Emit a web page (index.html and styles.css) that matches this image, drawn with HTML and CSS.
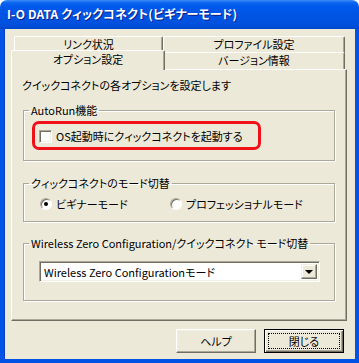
FILE: index.html
```html
<!DOCTYPE html>
<html lang="ja">
<head>
  <meta charset="UTF-8" />
  <title>I-O DATA クィックコネクト(ビギナーモード)</title>
  <link rel="stylesheet" href="styles.css">
</head>
<body>
  <div class="window">
    <div class="titlebar">
      <span class="title">I-O DATA クィックコネクト(ビギナーモード)</span>
    </div>

    <div class="client">
      <div class="tabs">
        <div class="tab-row back">
          <div class="tab tab-left">リンク状況</div>
          <div class="tab tab-right">プロファイル設定</div>
        </div>
        <div class="tab-row front">
          <div class="tab tab-left selected">オプション設定</div>
          <div class="tab tab-right">バージョン情報</div>
        </div>
      </div>

      <div class="panel">
        <p class="intro">クイックコネクトの各オプションを設定します</p>

        <fieldset class="group group-autorun">
          <legend>AutoRun機能</legend>
          <label class="highlight">
            <span class="check"></span>
            <span>OS起動時にクィックコネクトを起動する</span>
          </label>
        </fieldset>

        <fieldset class="group group-mode">
          <legend>クィックコネクトのモード切替</legend>
          <div class="radios">
            <label class="radio-item beginner">
              <span class="radio checked"></span>
              <span>ビギナーモード</span>
            </label>
            <label class="radio-item">
              <span class="radio"></span>
              <span>プロフェッショナルモード</span>
            </label>
          </div>
        </fieldset>

        <fieldset class="group group-wzc">
          <legend>Wireless Zero Configuration/クイックコネクト モード切替</legend>
          <div class="combo">
            <span class="combo-text">Wireless Zero Configurationモード</span>
            <span class="combo-btn"><span class="arrow"></span></span>
          </div>
        </fieldset>
      </div>

      <div class="buttons">
        <button class="btn">ヘルプ</button>
        <button class="btn default"><span class="focus">閉じる</span></button>
      </div>
    </div>
  </div>
</body>
</html>
```

FILE: styles.css
```css
* {
  box-sizing: border-box;
}

body {
  margin: 0;
  background: #fff;
  font-family: "Noto Sans CJK JP", sans-serif;
  font-size: 11px;
  font-feature-settings: "palt";
  color: #000;
  white-space: nowrap;
}

.window {
  width: 359px;
  height: 363px;
  display: flex;
  flex-direction: column;
}

.titlebar {
  flex: none;
  height: 29px;
  border-radius: 7px 7px 0 0;
  background: linear-gradient(to bottom, #3a8cf7 0px, #0a62ee 3px, #0058ea 7px, #0053e2 18px, #0050dc 25px, #0047cc 29px);
  display: flex;
  align-items: center;
  padding: 0 0 1px 7px;
}

.title {
  color: #fff;
  font-weight: bold;
  font-size: 12px;
  letter-spacing: 0.15px;
  line-height: 14px;
  text-shadow: 1px 1px #0a1e8a;
}

.client {
  flex: 1;
  background: #ece9d8;
  border: 4px solid #0053e4;
  border-top: 0;
  box-shadow: inset 1px 0 #0841c8;
  padding: 7px 8px 0 7px;
  display: flex;
  flex-direction: column;
}

/* tabs */
.tabs {
  flex: none;
  height: 33px;
  display: flex;
  flex-direction: column;
}

.tab-row {
  display: flex;
}

.tab-row.back {
  height: 16px;
  padding-left: 3px;
}

.tab-row.front {
  height: 17px;
  padding-left: 2px;
}

.tab {
  background: #ece9d8;
  border-top: 1px solid #fff;
  border-left: 1px solid #fff;
  border-right: 1px solid #716f64;
  box-shadow: inset -1px 0 #aca899;
  border-radius: 2px 2px 0 0;
  text-align: center;
  line-height: 14px;
  height: 18px;
}

.back .tab-left { width: 149px; }
.back .tab-right { width: 182px; }
.front .tab-left { width: 150px; }
.front .tab-right { width: 182px; }

.tab.selected {
  position: relative;
  z-index: 2;
  width: 154px;
  height: 20px;
  margin: -2px -2px 0 -2px;
  line-height: 17px;
}

.panel {
  flex: none;
  height: 252px;
  border-top: 1px solid #fff;
  border-left: 1px solid #fff;
  border-right: 1px solid #716f64;
  border-bottom: 1px solid #716f64;
  box-shadow: inset -1px -1px #aca899;
  padding: 8px 11px 0 11px;
  display: flex;
  flex-direction: column;
}

.intro {
  margin: 0 0 0 -1px;
  line-height: 14px;
}

/* group boxes */
.group {
  margin: 0;
  padding: 0;
  border: 1px solid #aca899;
  box-shadow: inset 1px 1px #fff, 1px 1px #fff;
  min-width: 0;
}

.group legend {
  margin-left: 5px;
  padding: 0 2px;
  line-height: 14px;
}

.group-autorun {
  margin-top: 11px;
  padding: 4px 0 10px 0;
}

.highlight {
  display: flex;
  align-items: center;
  width: 229px;
  height: 29px;
  margin-left: 8px;
  border: 3px solid #f01018;
  border-radius: 7px;
  padding: 0 0 0 4px;
  gap: 4px;
  line-height: 14px;
}

.check {
  flex: none;
  width: 13px;
  height: 13px;
  background: #fff;
  border: 1px solid;
  border-color: #aca899 #fff #fff #aca899;
  box-shadow: inset 1px 1px #716f64, inset -1px -1px #f1efe2;
  margin-top: 2px;
}

.group-mode {
  margin-top: 15px;
  padding: 7px 0 10px 0;
}

.radios {
  display: flex;
  align-items: center;
  margin-left: 16px;
  line-height: 14px;
}

.radio-item {
  display: flex;
  align-items: center;
  gap: 4px;
}

.radio-item.beginner {
  width: 130px;
}

.radio {
  flex: none;
  width: 12px;
  height: 12px;
  border-radius: 50%;
  background: #fff;
  border: 1px solid;
  border-color: #aca899 #fff #fff #aca899;
  box-shadow: inset 1px 1px #716f64;
  display: flex;
  align-items: center;
  justify-content: center;
}

.radio.checked::after {
  content: "";
  width: 4px;
  height: 4px;
  border-radius: 50%;
  background: #000;
}

.group-wzc {
  margin-top: 14px;
  padding: 11px 0 18px 0;
}

.combo {
  width: 281px;
  height: 21px;
  margin-left: 15px;
  background: #fff;
  border: 1px solid;
  border-color: #aca899 #fff #fff #aca899;
  box-shadow: inset 1px 1px #716f64, inset -1px -1px #f1efe2;
  display: flex;
  align-items: center;
  padding: 0 2px 0 4px;
}

.combo-text {
  flex: 1;
  line-height: 14px;
}

.combo-btn {
  width: 16px;
  height: 15px;
  background: #ece9d8;
  border: 1px solid;
  border-color: #f1efe2 #716f64 #716f64 #f1efe2;
  box-shadow: inset -1px -1px #aca899, inset 1px 1px #fff;
  display: flex;
  align-items: center;
  justify-content: center;
}

.arrow {
  width: 0;
  height: 0;
  border-left: 4px solid transparent;
  border-right: 4px solid transparent;
  border-top: 4px solid #000;
  margin-top: 1px;
}

/* buttons */
.buttons {
  flex: none;
  display: flex;
  justify-content: flex-end;
  gap: 8px;
  margin-top: 8px;
  padding-right: 3px;
}

.btn {
  width: 80px;
  height: 24px;
  padding: 0;
  font-family: inherit;
  font-size: 11px;
  font-feature-settings: "palt";
  line-height: 14px;
  color: #000;
  background: #ece9d8;
  border: 1px solid;
  border-color: #fff #716f64 #716f64 #fff;
  box-shadow: inset -1px -1px #aca899, inset 1px 1px #f1efe2;
  display: flex;
  align-items: center;
  justify-content: center;
}

.btn.default {
  border: 1px solid #000;
  box-shadow: inset 1px 1px #fff, inset -1px -1px #716f64, inset -2px -2px #aca899;
  padding: 3px;
}

.focus {
  flex: 1;
  align-self: stretch;
  border: 1px dotted #000;
  display: flex;
  align-items: center;
  justify-content: center;
}
```
